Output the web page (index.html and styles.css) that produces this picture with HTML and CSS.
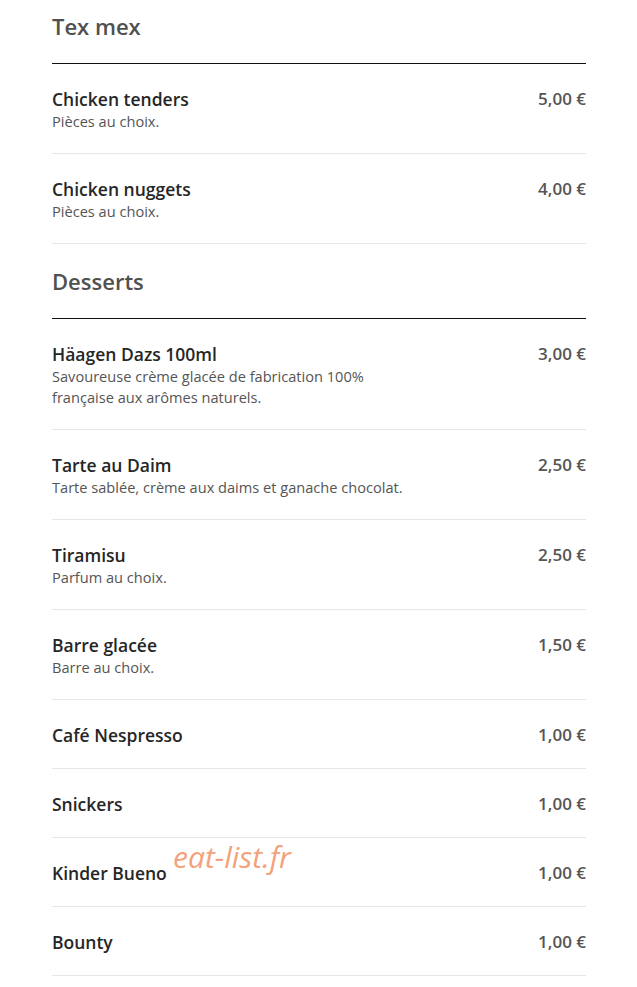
FILE: index.html
```html
<!DOCTYPE html>
<html lang="fr">

<head>
  <meta charset="UTF-8" />
  <meta name="viewport" content="width=device-width, initial-scale=1.0" />
  <title>Carte - Tex mex et Desserts</title>
  <link rel="stylesheet" href="styles.css">
</head>

<body>
  <div class="menu">
    <section class="menu-section">
      <h2 class="section-title">Tex mex</h2>
      <div class="item">
        <div class="item-info">
          <div class="item-name">Chicken tenders</div>
          <div class="item-desc">Pièces au choix.</div>
        </div>
        <div class="item-price">5,00 €</div>
      </div>
      <div class="item">
        <div class="item-info">
          <div class="item-name">Chicken nuggets</div>
          <div class="item-desc">Pièces au choix.</div>
        </div>
        <div class="item-price">4,00 €</div>
      </div>
    </section>

    <section class="menu-section">
      <h2 class="section-title">Desserts</h2>
      <div class="item">
        <div class="item-info">
          <div class="item-name">Häagen Dazs 100ml</div>
          <div class="item-desc">Savoureuse crème glacée de fabrication 100% française aux arômes naturels.</div>
        </div>
        <div class="item-price">3,00 €</div>
      </div>
      <div class="item">
        <div class="item-info">
          <div class="item-name">Tarte au Daim</div>
          <div class="item-desc">Tarte sablée, crème aux daims et ganache chocolat.</div>
        </div>
        <div class="item-price">2,50 €</div>
      </div>
      <div class="item">
        <div class="item-info">
          <div class="item-name">Tiramisu</div>
          <div class="item-desc">Parfum au choix.</div>
        </div>
        <div class="item-price">2,50 €</div>
      </div>
      <div class="item">
        <div class="item-info">
          <div class="item-name">Barre glacée</div>
          <div class="item-desc">Barre au choix.</div>
        </div>
        <div class="item-price">1,50 €</div>
      </div>
      <div class="item">
        <div class="item-info">
          <div class="item-name">Café Nespresso</div>
        </div>
        <div class="item-price">1,00 €</div>
      </div>
      <div class="item">
        <div class="item-info">
          <div class="item-name">Snickers</div>
        </div>
        <div class="item-price">1,00 €</div>
      </div>
      <div class="item">
        <div class="item-info">
          <div class="item-name">Kinder Bueno</div>
        </div>
        <div class="item-price">1,00 €</div>
        <span class="watermark">eat-list.fr</span>
      </div>
      <div class="item">
        <div class="item-info">
          <div class="item-name">Bounty</div>
        </div>
        <div class="item-price">1,00 €</div>
      </div>
    </section>
  </div>
</body>

</html>
```

FILE: styles.css
```css
body {
  margin: 0;
  background: #fff;
  font-family: "Open Sans", "Liberation Sans", sans-serif;
}

.menu {
  width: 534px;
  margin-left: 52px;
}

.section-title {
  margin: 0;
  padding: 24px 0 24px;
  font-size: 22px;
  line-height: 26px;
  font-weight: 600;
  color: #505050;
  border-bottom: 1px solid #111;
}

.menu-section:first-child .section-title {
  padding-top: 13px;
}

.item {
  position: relative;
  display: flex;
  justify-content: space-between;
  align-items: flex-start;
  padding: 23px 0 21px;
  border-bottom: 1px solid #e6e6e6;
}

.item-info {
  max-width: 365px;
}

.item-name {
  font-size: 17.5px;
  line-height: 24px;
  font-weight: 600;
  color: #262626;
}

.item-desc {
  font-size: 14.6px;
  line-height: 21px;
  color: #555;
}

.item-price {
  font-size: 17px;
  line-height: 24px;
  font-weight: 600;
  color: #555;
  white-space: nowrap;
}

/* filigrane du site */
.watermark {
  position: absolute;
  left: 121px;
  top: -2px;
  font-size: 30px;
  font-style: italic;
  font-weight: 400;
  color: #f2a27c;
}
```
